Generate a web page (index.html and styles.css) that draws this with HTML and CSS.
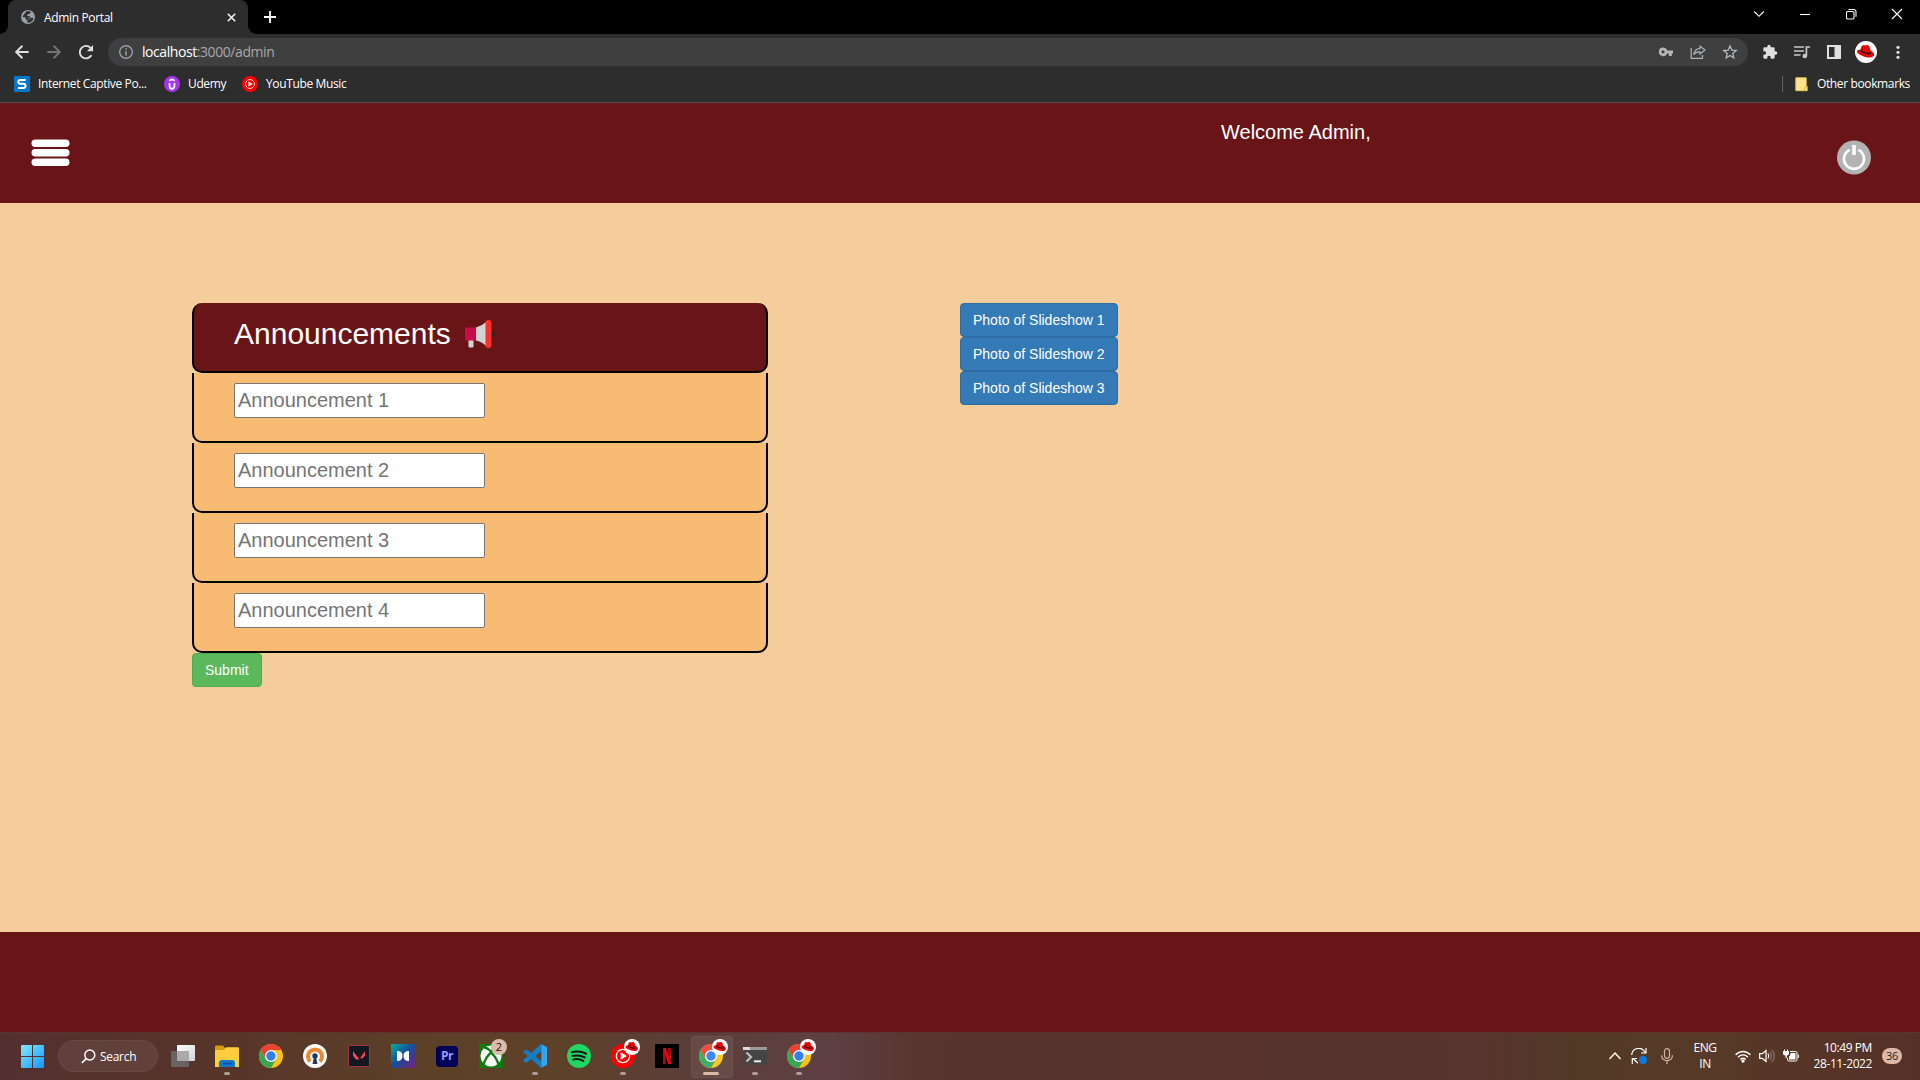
FILE: index.html
```html
<!DOCTYPE html>
<html lang="en">
<head>
<meta charset="utf-8">
<title>Admin Portal</title>
<link rel="stylesheet" href="styles.css">
</head>
<body>
<svg class="defs" aria-hidden="true">
  <symbol id="chrome" viewBox="0 0 48 48">
    <circle cx="24" cy="24" r="24" fill="#fbc116"/>
    <path fill="#34a853" d="M3.200 12 13.600 30 24 36 34.400 30 24 48A24 24 0 0 1 3.200 12z"/>
    <path fill="#ea4335" d="M3.200 12A24 24 0 0 1 44.800 12H24L13.600 30z"/>
    <circle cx="24" cy="24" r="12" fill="#fff"/><circle cx="24" cy="24" r="9.500" fill="#347ff0"/>
  </symbol>
  <symbol id="hat" viewBox="0 0 22 22">
    <circle cx="11" cy="11" r="11" fill="#fff"/>
    <path fill="#e00" d="M6.500 5.200C8 3.500 9.600 5 10.800 4.400c1.700-.8 3.400.1 3.900 1.800l.9 3.200c2.700 1.300 4.300 3.600 3.200 5.400-1.300 2.200-6.200 2.200-10.800.4C4.100 13.600 1.200 11.600 2.200 9.800c.5-.9 1.900-1 3.200-.9z"/>
    <path fill="none" stroke="#111" stroke-width="1.500" d="M5.400 9c1.800 2.700 7.300 4.600 10.500 2.900"/>
  </symbol>
  <symbol id="ytm" viewBox="0 0 24 24">
    <circle cx="12" cy="12" r="12" fill="#f00"/><circle cx="12" cy="12" r="6.700" fill="none" stroke="#fff" stroke-width="1.300"/><path fill="#fff" d="m9.700 8.300 6.200 3.700-6.200 3.700z"/>
  </symbol>
</svg>

<div class="tabstrip">
  <div class="tab">
    <svg class="globe" width="14" height="14" viewBox="0 0 14 14"><circle cx="7" cy="7" r="7" fill="#9aa0a6"/><path fill="#2d2d2d" d="M5.500 1.300 8.800 1.200 9.700 2.700 7.900 4.100 6.500 4.200 6 6.100 8.600 6.300 9.900 8l2.600-.2-.7 2.400L9.400 12.400 6.200 12.500 6.600 10.300 5 9.500 4.600 7.500 1.300 6.700z"/><path fill="#9aa0a6" d="M7 6.500 9.500 7.500 10 9 8 10.500 6.500 9z" opacity=".3"/></svg>
    <span class="tab-title">Admin Portal</span>
    <svg class="tab-close" width="9" height="9" viewBox="0 0 9 9"><path d="m.8.8 7.400 7.400m0-7.400L.8 8.200" stroke="#f1f1f1" stroke-width="1.600"/></svg>
  </div>
  <svg class="new-tab" width="12" height="12" viewBox="0 0 12 12"><path d="M6 0v12M0 6h12" stroke="#fff" stroke-width="1.800"/></svg>
  <div class="window-controls">
    <svg viewBox="0 0 12 12"><path d="m1.200 3.500 4.800 4.800 4.800-4.800"/></svg>
    <svg viewBox="0 0 12 12"><path d="M1 6.500h10"/></svg>
    <svg viewBox="0 0 12 12"><rect x="1.500" y="3.500" width="7.500" height="7.500" rx="1.200"/><path d="M3.500 1.500h5.200a2.300 2.300 0 0 1 2.300 2.300v5"/></svg>
    <svg viewBox="0 0 12 12"><path d="m1 1 10 10m0-10L1 11"/></svg>
  </div>
</div>

<div class="toolbar">
  <div class="nav">
    <svg viewBox="0 0 24 24"><path d="M20 12H5m7.500-7.500L5 12l7.500 7.500"/></svg>
    <svg class="dim" viewBox="0 0 24 24"><path d="M4 12h15m-7.500-7.500L19 12l-7.500 7.500"/></svg>
    <svg viewBox="0 0 24 24"><path d="M18.500 16A7.500 7.500 0 1 1 17.500 7"/><path d="M20.500 3.500v7.500H13z" fill="#dfdfdf" stroke="none"/></svg>
  </div>
  <div class="omnibox">
    <svg width="16" height="16" viewBox="0 0 16 16"><circle cx="8" cy="8" r="6.300" fill="none" stroke="#9aa0a6" stroke-width="1.400"/><path d="M8 7v4.500M8 4.300v1.500" stroke="#9aa0a6" stroke-width="1.500"/></svg>
    <span class="url"><b>localhost</b>:3000/admin</span>
    <div class="omni-actions">
      <svg viewBox="0 0 16 16"><path fill="#b5b8bb" fill-rule="evenodd" d="M5 3.500a4.300 4.300 0 0 1 4.100 3H15V9.500h-1.200V12h-3V9.500H9.100A4.300 4.300 0 1 1 5 3.500zM5 6.200a1.600 1.600 0 1 0 0 3.200 1.600 1.600 0 0 0 0-3.200z"/></svg>
      <svg viewBox="0 0 16 16"><g fill="none" stroke="#b0b3b5" stroke-width="1.200"><path d="M1.200 4v10.300h11.300V11"/><path d="M10 2.200 15 6l-5 3.900V7.800C7 7.700 5 8.700 3.700 10.800 4.200 7.300 6.200 4.700 10 4.300z"/></g></svg>
      <svg viewBox="0 0 16 16"><path fill="none" stroke="#b5b8bb" stroke-width="1.300" d="m8 2 1.800 4.100 4.400.4-3.400 2.900 1 4.400L8 11.500l-3.800 2.300 1-4.400L1.800 6.500l4.400-.4z"/></svg>
    </div>
  </div>
  <div class="ext">
    <svg viewBox="0 0 24 24"><path fill="#dfdfdf" d="M20.500 11H19V7a2 2 0 0 0-2-2h-4V3.500a2.500 2.500 0 0 0-5 0V5H4a2 2 0 0 0-2 2v3.800h1.500a2.700 2.700 0 0 1 0 5.400H2V20c0 1.100.9 2 2 2h3.800v-1.500a2.700 2.700 0 0 1 5.400 0V22H17a2 2 0 0 0 2-2v-4h1.500a2.500 2.500 0 0 0 0-5z"/></svg>
    <svg viewBox="0 0 16 16"><path d="M0 3h10M0 7h10M0 11h6.500" stroke="#c8c8c8" stroke-width="1.600"/><circle cx="10.800" cy="12" r="2.300" fill="#c8c8c8"/><path d="M12.400 12V3H16" stroke="#c8c8c8" stroke-width="1.700" fill="none"/></svg>
    <svg viewBox="0 0 16 16"><path fill="#dfdfdf" fill-rule="evenodd" d="M1 1h14v14H1zm2 2v10h5.500V3z"/></svg>
    <svg class="avatar"><use href="#hat"/></svg>
    <svg viewBox="0 0 16 16"><g fill="#dfdfdf"><circle cx="8" cy="3.300" r="1.600"/><circle cx="8" cy="8.300" r="1.600"/><circle cx="8" cy="13.300" r="1.600"/></g></svg>
  </div>
</div>

<div class="bookmarks">
  <span class="bm bm-1"><svg viewBox="0 0 16 16"><path fill="#0078ca" d="M0 0h16v16H0z"/><path d="M11.700 3.900H6.300C3.600 3.900 3.600 7.700 6.300 7.700h3.200c2.700 0 2.700 4.300 0 4.300H4" fill="none" stroke="#fff" stroke-width="2"/></svg><i>Internet Captive Po...</i></span>
  <span class="bm bm-2"><svg viewBox="0 0 16 16"><circle cx="8" cy="8" r="8" fill="#a435f0"/><path d="M5.600 7v3.200c0 3.400 4.800 3.400 4.800 0V7M5.300 4.700 8 3.200l2.700 1.500" fill="none" stroke="#fff" stroke-width="1.800"/></svg><i>Udemy</i></span>
  <span class="bm bm-3"><svg><use href="#ytm"/></svg><i>YouTube Music</i></span>
  <span class="bm bm-other"><svg width="13" height="15" viewBox="0 0 13 15"><path fill="#ffe591" stroke="#e6c04a" d="M.8.800h10.400v8.700h1v4.200H.8z"/><path d="M9.500 13.500v-3.500h2.500" fill="none" stroke="#e6b93a"/></svg><i>Other bookmarks</i></span>
</div>

<header class="site-header">
  <svg class="menu" width="39" height="28" viewBox="0 0 39 28"><g fill="#fff"><rect x=".5" y=".5" width="38" height="7.500" rx="3.750"/><rect x=".5" y="10" width="38" height="7.500" rx="3.750"/><rect x=".5" y="19.500" width="38" height="7.500" rx="3.750"/></g></svg>
  <p class="welcome">Welcome Admin,</p>
  <svg class="power" width="34" height="35" viewBox="0 0 34 35"><circle cx="17" cy="17.500" r="17" fill="#b3b3b3"/><path d="M12.700 9.800a10 10 0 1 0 8.600 0" fill="none" stroke="#fff" stroke-width="2.600"/><path d="M17 5v10" stroke="#fff" stroke-width="3.700"/></svg>
</header>

<main class="content">
  <form class="board">
    <div class="board-head">
      <h2>Announcements</h2>
      <svg width="31" height="28" viewBox="0 0 31 28"><circle cx="26.500" cy="14" r="3.400" fill="#26292c"/><path fill="#d3d3d3" d="M3.500 20h5v6.500q0 1-1 1h-3q-1 0-1-1zM11 7.500Q17 6 21 2v24q-4-4.500-10-5.500z"/><path fill="#ca0b4a" d="M1.500 7.500H11v13H1.500q-1.500 0-1.500-1.500V9q0-1.500 1.500-1.500z"/><rect x="20.500" width="6" height="28" rx="3" fill="#fb312e"/></svg>
    </div>
    <div class="board-row"><input type="text" placeholder="Announcement 1"></div>
    <div class="board-row"><input type="text" placeholder="Announcement 2"></div>
    <div class="board-row"><input type="text" placeholder="Announcement 3"></div>
    <div class="board-row"><input type="text" placeholder="Announcement 4"></div>
    <button type="button" class="btn btn-success">Submit</button>
  </form>
  <div class="slides">
    <button class="btn btn-primary">Photo of Slideshow 1</button>
    <button class="btn btn-primary">Photo of Slideshow 2</button>
    <button class="btn btn-primary">Photo of Slideshow 3</button>
  </div>
</main>

<footer class="site-footer"></footer>

<div class="taskbar">
  <svg class="start" width="23" height="23" viewBox="0 0 23 23"><defs><linearGradient id="win" x2="1" y2="1"><stop stop-color="#7eeafd"/><stop offset="1" stop-color="#1296fb"/></linearGradient></defs><path fill="url(#win)" d="M0 1q0-1 1-1h10v11H0zM12 0h10q1 0 1 1v10H12zM0 12h11v11H1q-1 0-1-1zM12 12h11v10q0 1-1 1H12z"/></svg>
  <div class="search"><svg width="15" height="15" viewBox="0 0 15 15"><circle cx="8.800" cy="6" r="5" fill="none" stroke="#fff" stroke-width="1.400"/><path d="M5.200 9.700.8 14" stroke="#fff" stroke-width="1.700"/></svg><span>Search</span></div>
  <div class="apps">
    <div class="app"><svg viewBox="0 0 24 24"><defs><linearGradient id="tv" x2="1" y2="1"><stop stop-color="#fff"/><stop offset="1" stop-color="#d2d2d2"/></linearGradient></defs><rect x="6" y="1" width="18" height="16" rx="1" fill="url(#tv)"/><rect y="7" width="18" height="16" rx="1" fill="#6a6a6a" opacity=".88"/><path d="M6 7h12v10H6z" fill="#aaa"/></svg></div>
    <div class="app running"><svg viewBox="0 0 24 24"><path fill="#d89b0c" d="M0 2.500Q0 1.500 1 1.500h7l2 2.500v3H0z"/><path fill="#ffce3e" d="M0 6h9l2-2.800h12q1 0 1 1V23H0z"/><path fill="#1377c9" d="M4 23v-4q0-3 3-3h10q3 0 3 3v4z"/><path d="M8 19.500h9" stroke="#0b539a" stroke-width="1.500"/></svg></div>
    <div class="app"><svg><use href="#chrome"/></svg></div>
    <div class="app"><svg viewBox="0 0 24 24"><circle cx="12" cy="12" r="12" fill="#fff"/><path d="M7.200 17.500a7 7 0 1 1 9.600 0" fill="none" stroke="#ef8732" stroke-width="4"/><circle cx="12" cy="12" r="2.700" fill="#1b3b63"/><path fill="#1b3b63" d="M11 13h2l1.500 7h-5z"/></svg></div>
    <div class="app"><svg viewBox="0 0 24 24"><path fill="#111821" stroke="#9b3540" d="M1.500 1.500h21v21h-21z"/><path fill="#ff4655" d="m6 7 6.500 8.500H9L6 11.800zm12 0v4.500l-2.200 2.700H13z"/></svg></div>
    <div class="app"><svg viewBox="0 0 24 24"><defs><linearGradient id="dt" x2="1" y2="1"><stop stop-color="#00ae9d"/><stop offset=".5" stop-color="#174c99"/><stop offset="1" stop-color="#7e2182"/></linearGradient></defs><path fill="url(#dt)" d="M0 0h24v24H0z"/><path fill="#fff" d="M6 7q5.500 0 5.500 5T6 17zm12 0q-5.500 0-5.500 5t5.500 5z"/></svg></div>
    <div class="app"><div class="pr">Pr</div></div>
    <div class="app"><svg viewBox="0 0 24 24"><path fill="#107c10" d="M0 0h24v24H0z"/><circle cx="12" cy="12" r="10.500" fill="#fff"/><path d="M4 22C6 15 9 11 12 8.500c3 2.500 6 6.500 8 13.500M5 3.500c3 0 5 2 7 4 2-2 4-4 7-4" fill="none" stroke="#107c10" stroke-width="2.300"/></svg><span class="count">2</span></div>
    <div class="app running"><svg viewBox="0 0 24 24"><path fill="#157ec4" d="M18 0 0 16.300l1.500 2L4 18.500 18 7.500z"/><path fill="#167bc0" d="M0 7.700 2 6l2-.3 14 11V24z"/><path fill="#31a5ef" d="m17.500 0 5.500 2.500q1 .5 1 1.500v16q0 1-1 1.500L17.500 24q.8-.5.800-1.500v-21q0-1-.8-1.500z"/></svg></div>
    <div class="app"><svg viewBox="0 0 24 24"><circle cx="12" cy="12" r="12" fill="#1ed760"/><path d="M4.800 8.200q8-2 14.300 1.500M5.500 12q6.500-1.700 12.300 1.400M6 15.600q5.500-1.500 10.300 1.300" stroke="#191414" stroke-width="2" stroke-linecap="round" fill="none"/></svg></div>
    <div class="app running"><svg><use href="#ytm"/></svg><svg class="profile"><use href="#hat"/></svg></div>
    <div class="app"><svg viewBox="0 0 24 24"><path d="M0 0h24v24H0z"/><path fill="#b20710" d="M8 4h2.800v16L8 20.300zm5.200 0H16v16.300l-2.800-.3z"/><path fill="#e50914" d="M8 4h2.800L16 20.300l-2.800-.3z"/></svg></div>
    <div class="app active"><svg><use href="#chrome"/></svg><svg class="profile"><use href="#hat"/></svg></div>
    <div class="app running"><svg viewBox="0 0 24 24"><path fill="#454545" d="M0 3h24v17q0 1-1 1H1q-1 0-1-1z"/><path fill="#9a9a9a" d="M0 3h24v3H0z"/><path fill="#ddd" d="M0 3h7v3H0z"/><path d="m3.500 8.500 4.500 4.500-4.500 4.500" fill="none" stroke="#bbb" stroke-width="2.300"/><path d="M11 17.300h7" stroke="#eee" stroke-width="2"/></svg></div>
    <div class="app running"><svg><use href="#chrome"/></svg><svg class="profile"><use href="#hat"/></svg></div>
  </div>
  <div class="tray">
    <svg class="t-up" viewBox="0 0 16 16"><path d="m2.500 11 5.500-6 5.500 6" stroke-width="1.400"/></svg>
    <svg class="t-sync" viewBox="0 0 16 16"><path d="M.7 7A7 7 0 0 1 14 4.300M15 0v5h-5M7 15.200l-5-4.700M1.300 16v-5.500H6"/><circle cx="12" cy="12" r="4.200" fill="#0f78d7" stroke="none"/></svg>
    <svg class="t-mic" viewBox="0 0 16 16"><g stroke="#c9b5a9"><rect x="5.500" y=".7" width="5" height="9.500" rx="2.500"/><path d="M2.500 7.300c0 7 11 7 11 0M8 12.500V16"/></g></svg>
    <div class="lang">ENG<br>IN</div>
    <svg class="t-wifi" viewBox="0 0 16 16"><path d="M.6 6.800c4.500-4.500 10.300-4.500 14.800 0M3 9.200c3-3 7-3 10 0M5.300 11.500q2.700-2.500 5.400 0" stroke-width="1.400"/><circle cx="8" cy="13" r="1.100" fill="#fff"/></svg>
    <svg class="t-vol" viewBox="0 0 16 16"><path d="M.6 5.700h2.700L7 2.500v11L3.300 10.300H.6zM9 5.500q1.500 2.500 0 5"/><path d="M11 3.800q3 4.200 0 8.400M13 2.200q4.500 5.800 0 11.600" stroke="#8d7467"/></svg>
    <svg class="t-bat" viewBox="0 0 16 16"><path d="M7 3.500h5.500q1.500 0 1.500 1.500v6.500q0 1.500-1.500 1.500H6q-1.500 0-1.500-1.500V10M15.300 6.500v3.500" stroke-width="1"/><path fill="#fff" stroke="none" d="M7.500 5h5v6.500H6V8.500q1.500-.8 1.500-2.500zM0 3h1V1.500h1V3h2V1.500h1V3h1v2.500Q6 7.500 3.800 7.500V10H2.500V7.500Q0 7.500 0 5.500z"/></svg>
    <div class="clock"><span>10:49 PM</span><span>28-11-2022</span></div>
    <div class="notif">36</div>
  </div>
</div>
</body>
</html>
```
FILE: styles.css
```css
* { box-sizing: border-box; }
body { margin: 0; width: 1920px; height: 1080px; overflow: hidden; display: flex; flex-direction: column; background: #f4cd9b; font-family: "Liberation Sans", Arial, sans-serif; }
svg { display: block; flex: none; }
.defs { display: none; }
.tabstrip, .toolbar, .bookmarks, .taskbar { font-family: "Open Sans", "Noto Sans", sans-serif; flex: none; display: flex; align-items: center; color: #fff; font-size: 12px; white-space: nowrap; }

/* Browser chrome */
.tabstrip { height: 34px; background: #000; padding-left: 8px; }
.tab { width: 240px; height: 34px; background: #2d2d2d; border-radius: 8px 8px 0 0; display: flex; align-items: center; padding: 0 12px 0 13px; position: relative; }
.tab::before, .tab::after { content: ""; position: absolute; bottom: 0; width: 8px; height: 8px; }
.tab::before { left: -8px; background: radial-gradient(circle at 0 0, #000 7.500px, #2d2d2d 8px); }
.tab::after { right: -8px; background: radial-gradient(circle at 100% 0, #000 7.500px, #2d2d2d 8px); }
.tab-title { margin-left: 9px; letter-spacing: -.35px; }
.tab-close { margin-left: auto; }
.new-tab { margin-left: 16px; }
.window-controls { margin: 0 17px 6px auto; display: flex; gap: 34px; }
.window-controls svg { width: 12px; height: 12px; fill: none; stroke: #fff; stroke-width: 1.100; }
.toolbar { height: 36px; background: #2d2d2d; }
.nav { display: flex; gap: 12px; margin-left: 12px; width: 96px; }
.nav svg { width: 20px; height: 20px; fill: none; stroke: #dfdfdf; stroke-width: 2.300; }
.nav .dim { stroke: #747474; }
.omnibox { width: 1640px; height: 28px; border-radius: 14px; background: #3f3f3f; display: flex; align-items: center; padding: 0 10px; }
.url { margin: 0 0 1px 8px; font-size: 14px; line-height: 19px; letter-spacing: -.43px; color: #a5a8ab; }
.url b { font-weight: 400; color: #fff; }
.omni-actions { margin-left: auto; display: flex; gap: 16px; }
.omni-actions svg { width: 16px; height: 16px; }
.ext { display: flex; align-items: center; gap: 16px; margin-left: 14px; }
.ext svg { width: 16px; height: 16px; }
.ext .avatar { width: 22px; height: 22px; margin: 0 -3px; }
.bookmarks { height: 33px; background: #2d2d2d; border-bottom: 1px solid #4c4c4c; padding: 0 11px 4px 14px; }
.bm { display: flex; align-items: center; gap: 8px; }
.bm i { font-style: normal; line-height: 16px; padding-bottom: 1px; letter-spacing: -.37px; }
.bm svg { width: 16px; height: 16px; }
.bm-1 { width: 150px; }
.bm-2 { width: 78px; }
.bm-other { margin-left: auto; width: 127px; height: 16px; padding-left: 12px; gap: 9px; border-left: 1px solid #5f6061; }
.bm-other svg { width: 13px; height: 15px; }

/* Page */
.site-header { flex: none; height: 100px; background: #691517; display: flex; align-items: flex-start; padding: 0 49px 0 31px; color: #fff; }
.menu { margin-top: 36px; }
.welcome { margin: 15px 0 0 1151px; font-size: 20px; line-height: 28px; }
.power { margin: 37px 0 0 auto; }
.content { flex: 1; display: flex; align-items: flex-start; gap: 192px; padding: 100px 192px 0; }
.board { width: 576px; }
.board-head, .board-row { height: 70px; border: 2px solid #000; border-top: 0; }
.board-head { background: #691517; border-radius: 10px; color: #fff; display: flex; align-items: flex-start; padding: 14px 40px 0; }
.board-head h2 { margin: 0; font-size: 30px; line-height: 33px; font-weight: 400; }
.board-head svg { margin: 3px 0 0 14px; }
.board-row { background: #f8bb73; border-radius: 0 0 10px 10px; padding: 10px 40px 0; }
.board-row input { display: block; width: 251px; height: 35px; border: 1px solid #767676; border-radius: 2px; padding: 1px 3px; font: 20px "Liberation Sans", Arial, sans-serif; background: #fff; }
.board-row input::placeholder { color: #757575; opacity: 1; }
.btn { display: block; height: 34px; padding: 0 12px; border: 1px solid; border-radius: 4px; color: #fff; font: 14px "Liberation Sans", Arial, sans-serif; }
.btn-success { background: #5cb85c; border-color: #4cae4c; }
.btn-primary { background: #337ab7; border-color: #2e6da4; }
.site-footer { flex: none; height: 100px; background: #691517; }

/* Taskbar */
.taskbar { height: 48px; padding-left: 21px; background: linear-gradient(90deg, #533030 0, #573529 220px, #5c4128 440px, #5d4129 560px, #5b3d38 690px, #5e4043 830px, #58352f 920px, #57322f 1180px, #58352f 1480px, #523a26 1580px, #573927 1720px, #553027 1920px); box-shadow: inset 0 1px #60322f; }
.search { width: 100px; height: 32px; margin-left: 14px; border-radius: 16px; background: rgba(255,255,255,.07); border: 1px solid rgba(255,255,255,.05); display: flex; align-items: center; padding-left: 22px; gap: 4px; letter-spacing: -.3px; }
.apps { display: flex; margin-left: 3px; }
.app { width: 44px; height: 48px; position: relative; display: flex; align-items: center; justify-content: center; }
.app svg { width: 24px; height: 24px; }
.app.running::after, .app.active::after { content: ""; position: absolute; bottom: 5px; left: 19px; width: 6px; height: 3px; border-radius: 2px; background: #ab9e9a; }
.app.active::after { left: 14px; width: 16px; background: #dcb9a8; }
.app.active::before { content: ""; position: absolute; left: 2px; top: 4px; width: 40px; height: 40px; border-radius: 4px; background: rgba(255,255,255,.07); border: 1px solid rgba(255,255,255,.04); }
.app .profile { position: absolute; left: 23px; top: 7px; width: 16px; height: 16px; }
.pr { width: 22px; height: 21px; background: #00005b; border-radius: 4px; color: #9999ff; font-weight: 700; font-size: 12px; line-height: 19px; text-align: center; letter-spacing: -.5px; }
.count { position: absolute; left: 22px; top: 7px; width: 16px; height: 16px; border-radius: 50%; background: #dcb9a8; color: #111; font-size: 11px; line-height: 16px; text-align: center; }
.tray { margin-left: auto; display: flex; align-items: center; width: 313px; }
.tray svg { width: 16px; height: 16px; fill: none; stroke: #fff; stroke-width: 1.200; }
.t-sync { margin-left: 8px; }
.t-mic { margin-left: 12px; }
.lang { width: 60px; text-align: center; line-height: 16px; margin-left: 0; letter-spacing: -.4px; }
.t-vol, .t-bat { margin-left: 8px; }
.clock { width: 73px; display: flex; flex-direction: column; align-items: flex-end; line-height: 16px; letter-spacing: -.42px; }
.notif { width: 20px; height: 16px; margin-left: 10px; border-radius: 8px; background: #dcb9a8; color: #222; font-size: 11px; line-height: 16px; text-align: center; letter-spacing: -.4px; }
```
